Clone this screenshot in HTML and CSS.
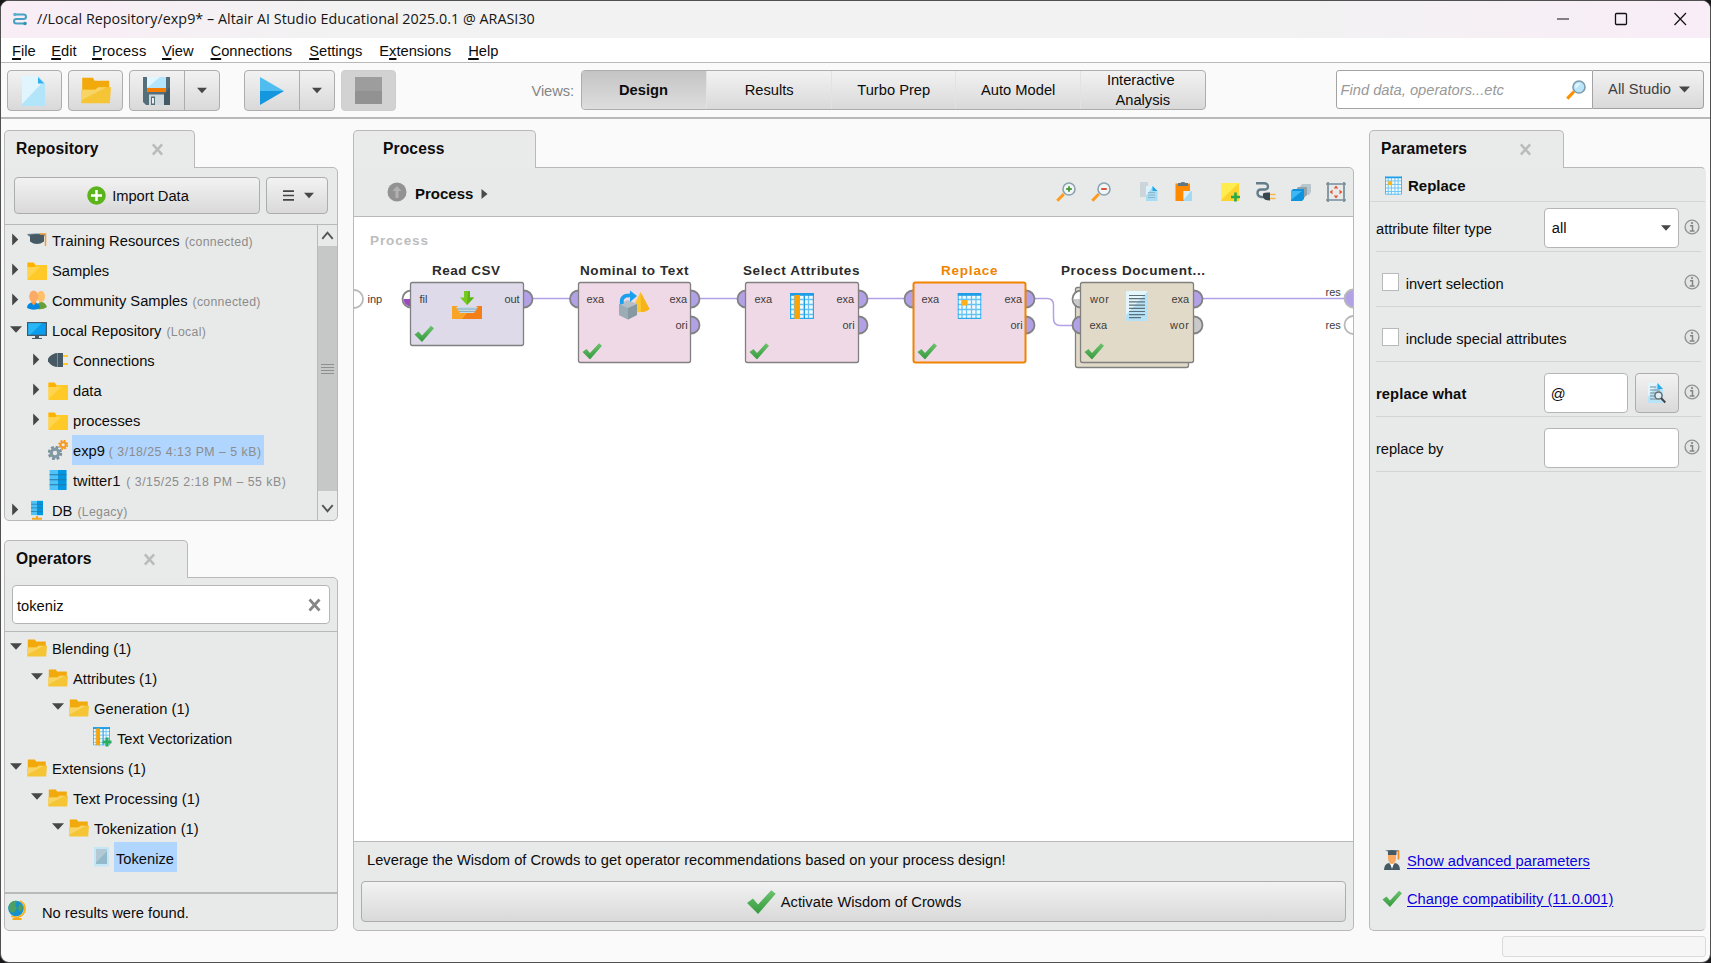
FILE: index.html
```html
<!DOCTYPE html>
<html lang="en">
<head>
<meta charset="utf-8">
<title>Altair AI Studio</title>
<link rel="stylesheet" href="styles.css">
</head>
<body>
<svg class="defs" width="0" height="0" aria-hidden="true">
  <defs>
    <linearGradient id="gCheck" x1="0" y1="0" x2="0" y2="1"><stop offset="0" stop-color="#6cc36f"/><stop offset="1" stop-color="#359a3c"/></linearGradient>
  </defs>
  <symbol id="right" viewBox="0 0 8 14"><path d="M1 .5L7.5 7L1 13.5Z" fill="#474747"/></symbol>
  <symbol id="down" viewBox="0 0 12 7"><path d="M0 .3H12L6 6.8Z" fill="#474747"/></symbol>
  <symbol id="x" viewBox="0 0 14 14"><path d="M2 1.5L12 12.5M12 1.5L2 12.5" stroke="currentColor" stroke-width="2.7" fill="none"/></symbol>
  <symbol id="folder" viewBox="0 0 20 18"><path d="M1 1H7L8.500 3H20V18H.5V1Z" fill="#ffca28"/><path d="M.5 .5H6.500L8 2.500V5H.5Z" fill="#ffb300"/><path d="M.5 5H13L.5 17Z" fill="#ffd54f"/></symbol>
  <symbol id="folderopen" viewBox="0 0 20 18"><path d="M.8 .5H8L9 2.500H18.800V15H.8Z" fill="#f2a90c"/><path d="M.3 17.500V8.500H9.500L11.500 6.800H20L19.200 17.500Z" fill="#f5c535"/><path d="M.3 15.500V8.500H9.500L11.500 6.800H17L.3 15.500Z" fill="#f7d464"/></symbol>
  <symbol id="check" viewBox="0 0 20 17"><path d="M.5 9.500L4.500 6.500L8 10.500L17 .8L20 3.200L8 17Z" fill="url(#gCheck)"/></symbol>
  <symbol id="table" viewBox="0 0 24 26"><rect width="24" height="26" fill="#f2fafe"/><path d="M4.500 2V26M9 2V26M14 2V26M18.500 2V26M0 6.500H24M0 11.500H24M0 16.500H24M0 21.500H24" stroke="#66c2f2" stroke-width="1.300"/><path d="M.6 0V25.400H23.400V0" fill="none" stroke="#29abf2" stroke-width="1.200"/><rect width="24" height="2.800" fill="#1f9ee6"/></symbol>
  <symbol id="tablecell" viewBox="0 0 24 26"><use href="#table" width="24" height="26"/><rect x="4.600" y="7" width="5.500" height="5.500" fill="#ffb210"/></symbol>
  <symbol id="tablecol" viewBox="0 0 24 26"><use href="#table" width="24" height="26"/><path d="M14.500 2V26" stroke="#1f9ee6"/><rect x="4.500" y="2" width="5.500" height="24" fill="#ffa300"/></symbol>
  <symbol id="doc" viewBox="0 0 22 30"><rect width="22" height="30" fill="#b6e2f7"/><path d="M0 0H22L0 24Z" fill="#e4f5fc"/><path d="M3 4.500H19M3 7.700H19M3 10.900H19M3 14.100H19M3 17.300H19M3 20.500H19M3 23.700H19M3 26.700H15" stroke="#5d7078" stroke-width="1.200"/></symbol>
  <symbol id="page" viewBox="0 0 24 30"><path d="M0 0H16L23 7V30H0Z" fill="#b3e5fa"/><path d="M0 0H16L20 7L0 28Z" fill="#e1f5fe"/><path d="M16 1L22 7.500H16Z" fill="#35b0ee"/></symbol>
  <symbol id="glass" viewBox="0 0 20 20"><path d="M8 11.500L1.300 18.600" stroke="#ff9100" stroke-width="3.200"/><circle cx="13" cy="7" r="6" fill="#b9e5fb" stroke="#7f9dac" stroke-width="1.600"/><path d="M9 6a4 4 0 0 1 6-2.500L9.500 9Z" fill="#e1f5fe"/></symbol>
  <symbol id="zoom" viewBox="0 0 20 20"><path d="M7.800 12L1.300 18.800" stroke="#ff9a1c" stroke-width="3"/><circle cx="13" cy="7" r="6" fill="#f0f6f8" stroke="#8ba3af" stroke-width="1.600"/></symbol>
  <symbol id="info" viewBox="0 0 16 16"><circle cx="8" cy="8" r="6.900" fill="#e3e5e5" stroke="#929292" stroke-width="1.400"/><path d="M6 6.700H8.500V11.500M5.700 12H10.500" stroke="#858585" stroke-width="1.500" fill="none"/><circle cx="8" cy="4.100" r="1.100" fill="#858585"/></symbol>
  <symbol id="db" viewBox="0 0 16 19"><rect width="16" height="19" fill="#4fc3f7"/><rect x="8" width="8" height="19" fill="#0397e3"/><path d="M0 4.500H16M0 9.300H16M0 14.100H16" stroke="#2579a6" stroke-width="1"/></symbol>
  <symbol id="gear" viewBox="0 0 20 20"><circle cx="7" cy="13" r="5.900" fill="none" stroke="#78909c" stroke-width="2.600" stroke-dasharray="2.700 1.930"/><circle cx="7" cy="13" r="3.800" fill="none" stroke="#8298a3" stroke-width="3.200"/><circle cx="15.200" cy="4.800" r="4" fill="none" stroke="#ff9100" stroke-width="1.800" stroke-dasharray="1.800 1.340"/><circle cx="15.200" cy="4.800" r="2.600" fill="none" stroke="#f59a26" stroke-width="2.100"/></symbol>
</svg>

<div class="window">
  <header class="titlebar">
    <svg class="logo" viewBox="0 0 14 14"><path d="M1 2.500H10.500Q13 2.500 13 4.700T10.500 7H3.500Q1 7 1 9.200T3.500 11.500H12" fill="none" stroke="#45a2c1" stroke-width="2"/><circle cx="2" cy="2.500" r="1.800" fill="#5db3cf"/><circle cx="12" cy="11.500" r="1.800" fill="#3494b5"/></svg>
    <span class="title">//Local Repository/exp9* – Altair AI Studio Educational 2025.0.1 @ ARASI30</span>
    <svg class="winctl" viewBox="0 0 130 14"><path d="M0 7H12M117.500 1L129 13M129 1L117.500 13" stroke="#111" stroke-width="1.200"/><rect x="58.500" y="1.500" width="11" height="11" rx="1" fill="none" stroke="#111" stroke-width="1.300"/></svg>
  </header>
  <nav class="menubar">
    <span><u>F</u>ile</span><span><u>E</u>dit</span><span class="m-process"><u>P</u>rocess</span><span class="m-view"><u>V</u>iew</span><span><u>C</u>onnections</span><span><u>S</u>ettings</span><span>E<u>x</u>tensions</span><span><u>H</u>elp</span>
  </nav>
  <div class="toolbar">
    <button class="btn tool"><svg width="24" height="30"><use href="#page"/></svg></button>
    <button class="btn tool open"><svg width="30" height="27"><use href="#folderopen"/></svg></button>
    <div class="btn split save"><span class="main"><svg width="27" height="28" viewBox="0 0 27 28"><path d="M0 0H27V28H3L0 25Z" fill="#546e7a"/><path d="M27 0V28H12L27 10Z" fill="#455a64"/><rect x="4" width="19" height="11" fill="#b3e5fc"/><path d="M4 0H17L4 11Z" fill="#e1f5fe"/><rect x="4" y="11" width="19" height="4" fill="#f57c00"/><rect x="6" y="17.500" width="15" height="10.500" fill="#cfd8dc"/><rect x="8" y="19.500" width="4" height="8.500" fill="#546e7a"/><rect x="9" y="21" width="2" height="5.500" fill="#eceff1"/></svg></span><span class="drop"><svg width="10" height="7"><use href="#down"/></svg></span></div>
    <div class="btn split run"><span class="main"><svg width="24" height="28" viewBox="0 0 24 28"><path d="M0 0L24 14H0Z" fill="#4fbdf0"/><path d="M0 14H24L0 28Z" fill="#1597de"/></svg></span><span class="drop"><svg width="10" height="7"><use href="#down"/></svg></span></div>
    <button class="btn tool stop"><i></i></button>
    <span class="views">Views:</span>
    <div class="btn viewgroup"><span class="active">Design</span><span>Results</span><span>Turbo Prep</span><span>Auto Model</span><span class="two">Interactive<br>&nbsp;Analysis</span></div>
    <div class="search"><em>Find data, operators...etc</em><svg width="20" height="20"><use href="#glass"/></svg></div>
    <div class="btn scope">All Studio<svg width="11" height="7"><use href="#down"/></svg></div>
  </div>

  <main class="workspace">
    <section class="left">
      <div class="tab t-repo"><b>Repository</b><svg width="13" height="13"><use href="#x"/></svg></div>
      <div class="panel">
        <div class="importrow">
          <button class="btn import"><svg width="19" height="19" viewBox="0 0 19 19"><circle cx="9.500" cy="9.500" r="9.300" fill="#5cb41c"/><path d="M9.500 4V15M4 9.500H15" stroke="#fff" stroke-width="2.500"/></svg>Import Data</button>
          <button class="btn more"><svg width="11" height="11" viewBox="0 0 11 11"><path d="M0 1.200H11M0 5.500H11M0 9.800H11" stroke="#444" stroke-width="1.700"/></svg><svg width="10" height="7"><use href="#down"/></svg></button>
        </div>
        <div class="treewrap">
          <div class="tree">
            <div class="row"><svg class="r"><use href="#right"/></svg><svg class="ic" viewBox="0 0 20 20"><path d="M0 4L10 3.500L19 4L17 6.500H2Z" fill="#607d8b"/><path d="M3 5.500Q10 3 17 5.500V11.500Q10 16.500 3 11.500Z" fill="#455a64"/><path d="M13 4H18.500V16" fill="none" stroke="#f59a36" stroke-width="1.500"/></svg><span class="wide">Training Resources</span><small>(connected)</small></div>
            <div class="row"><svg class="r"><use href="#right"/></svg><svg class="ic f"><use href="#folder"/></svg><span>Samples</span></div>
            <div class="row"><svg class="r"><use href="#right"/></svg><svg class="ic" viewBox="0 0 20 20"><path d="M10 19Q10 12 14 12T20 17Q16 20 10 19Z" fill="#689f38"/><ellipse cx="14" cy="6.500" rx="4" ry="5.800" fill="#ffc06a"/><path d="M0 18Q0 12.500 6.500 12.500T13 18Q7 21.500 0 18Z" fill="#0288e0"/><path d="M4.500 11H9V13L6.700 15.500L4.500 13Z" fill="#f7953c"/><ellipse cx="6.700" cy="6.500" rx="4.500" ry="6" fill="#fbab66"/></svg><span>Community Samples</span><small>(connected)</small></div>
            <div class="row"><svg class="d"><use href="#down"/></svg><svg class="ic" viewBox="0 0 20 20"><rect y="2" width="20" height="14" fill="#455a64"/><rect x="1.300" y="3.300" width="17.400" height="11.400" fill="#0c9cec"/><path d="M1.300 3.300H15L3 14.700H1.300Z" fill="#29b6f6"/><path d="M8 16H12V18H15V19H5V18H8Z" fill="#455a64"/></svg><span>Local Repository</span><small>(Local)</small></div>
            <div class="row l2"><svg class="r"><use href="#right"/></svg><svg class="ic" viewBox="0 0 20 20"><path d="M0 8.500Q4 3 10 3H15V17H10Q4 17 0 11.500Z" fill="#455a64"/><path d="M9.500 3V17" stroke="#78909c"/><path d="M15 6H20M15 14H20" stroke="#ffca28" stroke-width="1.800"/></svg><span>Connections</span></div>
            <div class="row l2"><svg class="r"><use href="#right"/></svg><svg class="ic f"><use href="#folder"/></svg><span>data</span></div>
            <div class="row l2"><svg class="r"><use href="#right"/></svg><svg class="ic f"><use href="#folder"/></svg><span class="wide">processes</span></div>
            <div class="row l2"><i class="r"></i><svg class="ic"><use href="#gear"/></svg><div class="sel"><span>exp9</span><small class="date">( 3/18/25 4:13 PM – 5 kB)</small></div></div>
            <div class="row l2"><i class="r"></i><svg class="ic"><use href="#db"/></svg><span>twitter1</span><small class="date gap">( 3/15/25 2:18 PM – 55 kB)</small></div>
            <div class="row"><svg class="r"><use href="#right"/></svg><svg class="ic" viewBox="0 0 20 20"><use href="#db" x="4" y="0" width="12" height="16"/><path d="M10 16V19M5 18.800H15" stroke="#f5a623" stroke-width="2"/></svg><span>DB</span><small>(Legacy)</small></div>
          </div>
          <div class="scroll">
            <svg class="up" viewBox="0 0 20 21"><path d="M4.500 14L10 7.500L15.500 14" fill="none" stroke="#555" stroke-width="2"/></svg>
            <div class="thumb"><i></i><i></i><i></i><i></i></div>
            <svg class="up" viewBox="0 0 20 21"><path d="M4.500 10L10 16.500L15.500 10" fill="none" stroke="#555" stroke-width="2"/></svg>
          </div>
        </div>
      </div>
      <div class="tab t-ops"><b>Operators</b><svg width="13" height="13"><use href="#x"/></svg></div>
      <div class="panel">
        <div class="opsearch"><div class="field"><span>tokeniz</span><svg width="15" height="14"><use href="#x"/></svg></div></div>
        <div class="tree ops">
          <div class="row"><svg class="d"><use href="#down"/></svg><svg class="ic f"><use href="#folderopen"/></svg><span>Blending (1)</span></div>
          <div class="row l2"><svg class="d"><use href="#down"/></svg><svg class="ic f"><use href="#folderopen"/></svg><span>Attributes (1)</span></div>
          <div class="row l3"><svg class="d"><use href="#down"/></svg><svg class="ic f"><use href="#folderopen"/></svg><span>Generation (1)</span></div>
          <div class="row l4"><i class="d"></i><svg class="ic" viewBox="0 0 20 20"><use href="#tablecol" x="1" y="0" width="17" height="18.500"/><path d="M15 10.500V19.500M10.500 15H19.500" stroke="#27ae60" stroke-width="3"/></svg><span>Text Vectorization</span></div>
          <div class="row"><svg class="d"><use href="#down"/></svg><svg class="ic f"><use href="#folderopen"/></svg><span>Extensions (1)</span></div>
          <div class="row l2"><svg class="d"><use href="#down"/></svg><svg class="ic f"><use href="#folderopen"/></svg><span class="proc">Text Processing (1)</span></div>
          <div class="row l3"><svg class="d"><use href="#down"/></svg><svg class="ic f"><use href="#folderopen"/></svg><span>Tokenization (1)</span></div>
          <div class="row l4"><i class="d"></i><svg class="ic" viewBox="0 0 20 20"><rect x="2" width="15" height="19.500" fill="#c3e7f7"/><path d="M4 2H15V4L4 15Z" fill="#b3c9d4"/><path d="M15 4V17H4V15Z" fill="#94b9cb"/></svg><div class="sel"><span>Tokenize</span></div></div>
        </div>
        <div class="result"><svg width="18" height="20" viewBox="0 0 18 20"><path d="M12 1Q17 3 17 9T9 17.500L3 16" fill="none" stroke="#f5b21c" stroke-width="1.800"/><path d="M9 17V19M4.500 19H13.500" stroke="#f5a81c" stroke-width="1.800"/><circle cx="8" cy="8.500" r="7.800" fill="#1590cf"/><path d="M1 5Q4 0 9 1L7 5L9 8L6 13Q1 12 .5 8ZM11 4L15 6Q15 10 12 12L10 9Z" fill="#4ca064"/></svg><span>No results were found.</span></div>
      </div>
    </section>

    <section class="center">
      <div class="tab t-proc"><b>Process</b></div>
      <div class="panel">
        <div class="prochead">
          <svg width="20" height="20" viewBox="0 0 20 20"><circle cx="10" cy="10" r="9.500" fill="#929292"/><path d="M10 4L14.500 9H11.500V16H8.500V9H5.500Z" fill="#b2b2b2"/></svg>
          <b>Process</b><svg class="crumb" width="7" height="10"><path d="M.5 0L6.500 5L.5 10Z" fill="#4a4a4a"/></svg>
          <div class="tools">
            <svg viewBox="0 0 20 20"><use href="#zoom"/><path d="M13 4.200V9.800M10.200 7H15.800" stroke="#4c9a3a" stroke-width="1.900"/></svg>
            <svg class="g1" viewBox="0 0 20 20"><use href="#zoom"/><path d="M10.200 7H15.800" stroke="#e0533a" stroke-width="1.900"/></svg>
            <svg class="g2" viewBox="0 0 20 20"><path d="M1 0H9V15H1Z" fill="#ccd6da"/><path d="M7 4H14L18.500 9V19H7Z" fill="#a8dcf5"/><path d="M7 4H14L7 14Z" fill="#dcf2fc"/><path d="M13.500 4L18.500 9H13.500Z" fill="#1fa5ea"/><path d="M9 10.500H16M9 13H16M9 15.500H16" stroke="#8fb5c6"/></svg>
            <svg class="g1" viewBox="0 0 20 20"><rect x="1.500" y="1.500" width="14.500" height="17.500" fill="#ff8a00"/><path d="M8 19L16 9V19Z" fill="#f57000"/><path d="M4 1H6.500Q7 0 9 0T11.500 1H14V4H4Z" fill="#5f7883"/><path d="M9.500 9H18V19H9.500Z" fill="#a4d9f3"/><path d="M9.500 9H17L9.500 18Z" fill="#d9eef8"/></svg>
            <svg class="g3" viewBox="0 0 20 20"><path d="M0 1H18V19H0Z" fill="#fdd32c"/><path d="M0 1H18L0 18Z" fill="#ffec4f"/><path d="M14.500 10.500V19.500M10 15H19" stroke="#27a84a" stroke-width="2.600"/></svg>
            <svg class="g1" viewBox="0 0 20 20"><path d="M0 1.300H8Q12 1.300 12 4.500T8 7.500H5Q1.500 7.500 1.500 11T5.500 15H8" fill="none" stroke="#647d8a" stroke-width="2.400"/><path d="M7 11.500Q9 10 14 10.500V18.500Q8 18.500 7 15Z" fill="#37474f"/><path d="M14 12.500H19.500M14 16.500H19.500" stroke="#f5b74c" stroke-width="1.500"/></svg>
            <svg class="g1" viewBox="0 0 20 20"><path d="M9 5L11 2H20V10L18 13H9Z" fill="#b9c6cc"/><path d="M5 8L7 5H16V13L13 16H5Z" fill="#8fa3ad"/><path d="M0 9L2 7H13V17L11 19H0Z" fill="#0f93df"/><path d="M0 9H11L0 18Z" fill="#3db8f5"/></svg>
            <svg class="g1" viewBox="0 0 20 20"><path d="M2 0V20M18 0V20M0 2H20M0 18H20" stroke="#758d99" stroke-width="1.700"/><path d="M10 3.500L12.300 6.500H7.700ZM10 16.500L7.700 13.500H12.300ZM3.500 10L6.500 7.700V12.300ZM16.500 10L13.500 12.300V7.700Z" fill="#e5532d"/></svg>
          </div>
        </div>
        <svg class="canvas" viewBox="354 217 999 624">
          <text class="ghost" x="370" y="244.500" textLength="58">Process</text>
          <g class="wire"><path d="M533 298.500H571M700 298.500H738M868 298.500H905M1202 298.500H1345M1034 298.500H1047Q1053.500 298.500 1053.500 305V318Q1053.500 325.500 1060 325.500H1072"/></g>
          <g class="port outer"><circle cx="354" cy="299" r="9" class="empty"/><circle cx="1353.500" cy="298.500" r="9"/><circle cx="1353.500" cy="325" r="9" class="empty"/></g>
          <g class="wire"><path d="M1346 298.500H1354"/></g>
          <g class="pt"><text x="367.500" y="302.500">inp</text><text x="1325.500" y="296">res</text><text x="1325.500" y="329">res</text></g>

          <rect class="box tan" x="1075.500" y="287.500" width="113" height="80" rx="2"/>
          <g class="port">
            <circle cx="411" cy="299" r="8.500" class="empty"/><path class="file" d="M403.500 299H411V306.500Q404 306 403.500 299Z"/>
            <circle cx="524" cy="299" r="8.500"/>
            <circle cx="578.500" cy="299" r="8.500"/><circle cx="691" cy="299" r="8.500"/><circle cx="691" cy="325" r="8.500"/>
            <circle cx="746" cy="299" r="8.500"/><circle cx="859" cy="299" r="8.500"/><circle cx="859" cy="325" r="8.500"/>
            <circle cx="913" cy="299" r="8.500"/><circle cx="1026" cy="299" r="8.500"/><circle cx="1026" cy="325" r="8.500"/>
            <circle cx="1081" cy="299" r="8.500" class="empty"/><path class="grayfill" d="M1073.500 299H1081V306.500Q1074 306 1073.500 299Z"/><circle cx="1081" cy="325" r="8.500"/>
            <circle cx="1194" cy="299" r="8.500"/><circle cx="1194" cy="325" r="8.500" class="gray"/>
          </g>
          <rect class="box lilac" x="410.500" y="282.500" width="113" height="63" rx="2"/>
          <rect class="box pink" x="578.500" y="282.500" width="112" height="80" rx="2"/>
          <rect class="box pink" x="745.500" y="282.500" width="113" height="80" rx="2"/>
          <rect class="box pink chosen" x="913.500" y="282.500" width="112" height="80" rx="2"/>
          <rect class="box tan" x="1080.500" y="282.500" width="113" height="80" rx="2"/>

          <g class="name">
            <text x="432" y="274.700" textLength="68">Read CSV</text>
            <text x="580" y="274.700" textLength="108.500">Nominal to Text</text>
            <text x="743" y="274.700" textLength="116.500">Select Attributes</text>
            <text x="941" y="274.700" textLength="56.500" class="orange">Replace</text>
            <text x="1061" y="274.700" textLength="144">Process Document...</text>
          </g>
          <g class="pt">
            <text x="419.500" y="303">fil</text><text x="504.500" y="303" textLength="15">out</text>
            <text x="586.500" y="303">exa</text><text x="669.500" y="303">exa</text><text x="675.500" y="329">ori</text>
            <text x="754.500" y="303">exa</text><text x="836.500" y="303">exa</text><text x="842.500" y="329">ori</text>
            <text x="921.500" y="303">exa</text><text x="1004.500" y="303">exa</text><text x="1010.500" y="329">ori</text>
            <text x="1090" y="303" textLength="19">wor</text><text x="1089.500" y="329">exa</text><text x="1171.500" y="303">exa</text><text x="1170" y="329" textLength="19">wor</text>
          </g>
          <g>
            <path d="M452 306H457L461 313H473L477 306H482V319H452Z" fill="#f9a426"/><path d="M467 313H473L477 306H482V319H462Z" fill="#f57f17"/>
            <path d="M456 307H478L474 313H460Z" fill="#c4dbe7"/><path d="M457 309H477M459 311.500H475" stroke="#7fa0b3" stroke-width=".8"/>
            <path d="M464 291H470V297.500H474L467 305L460 297.500H464Z" fill="#76c91f"/><path d="M467 305L474 297.500H470V291H468Z" fill="#5db514"/>
            <path d="M640.500 292L649.500 309Q645 313 636 312L632 309Z" fill="#fdc82f"/><path d="M640.500 292L649.500 309Q646 312 641 312Z" fill="#f5b41a"/>
            <path d="M619 304L628 300L637 304V315L628 319.500L619 315Z" fill="#b4c0c6"/><path d="M619 304L628 308V319.500L619 315Z" fill="#9cacb4"/><path d="M628 308L637 304V315L628 319.500Z" fill="#8698a1"/>
            <path d="M622 304Q620 295 631 295.500" fill="none" stroke="#1ba0ee" stroke-width="3.800"/><path d="M630 290.500L637 296L630 302Z" fill="#1ba0ee"/>
            <use href="#tablecol" x="790" y="293" width="24" height="26"/>
            <use href="#tablecell" x="957" y="293" width="25" height="26"/>
            <use href="#doc" x="1126" y="291" width="22" height="30"/>
            <use href="#check" x="414" y="325" width="20" height="17"/>
            <use href="#check" x="582" y="342.500" width="20" height="17"/>
            <use href="#check" x="749" y="342.500" width="20" height="17"/>
            <use href="#check" x="917" y="342.500" width="20" height="17"/>
            <use href="#check" x="1084" y="342.500" width="20" height="17"/>
          </g>
        </svg>
        <div class="crowds">
          <p>Leverage the Wisdom of Crowds to get operator recommendations based on your process design!</p>
          <button class="btn"><svg width="30" height="25"><use href="#check"/></svg>Activate Wisdom of Crowds</button>
        </div>
      </div>
    </section>

    <section class="right">
      <div class="tab t-par"><b>Parameters</b><svg width="13" height="13"><use href="#x"/></svg></div>
      <div class="panel">
        <div class="parhead"><svg width="17" height="19"><use href="#tablecell"/></svg><b>Replace</b></div>
        <div class="params">
          <div class="param first"><label>attribute filter type</label><div class="field combo">all<svg width="10" height="8"><use href="#down"/></svg></div><svg class="info"><use href="#info"/></svg></div>
          <div class="param"><i class="box"></i><label class="w2">invert selection</label><svg class="info"><use href="#info"/></svg></div>
          <div class="param"><i class="box"></i><label class="w2">include special attributes</label><svg class="info"><use href="#info"/></svg></div>
          <div class="param"><label class="bold">replace what</label><div class="field short">@</div><button class="btn regex"><svg width="18" height="21" viewBox="0 0 18 21"><path d="M0 0H10L15 6V20H0Z" fill="#b9e4f8"/><path d="M0 0H10L0 14Z" fill="#e2f4fc"/><path d="M9.500 0L15 6H9.500Z" fill="#2aabec"/><path d="M2 4H8M2 7H12M2 10H8M2 13H7M2 16H9" stroke="#6e8b99"/><circle cx="10.500" cy="12.500" r="3.600" fill="#dceff7" stroke="#6b6b6b" stroke-width="1.500"/><path d="M13 15L17.300 19.500" stroke="#444" stroke-width="2"/></svg></button><svg class="info"><use href="#info"/></svg></div>
          <div class="param"><label>replace by</label><div class="field"></div><svg class="info"><use href="#info"/></svg></div>
        </div>
        <div class="links">
          <div><svg width="18" height="21" viewBox="0 0 18 21"><path d="M1 20Q1 14 6 13L9 16L12 13Q17 14 17 20Z" fill="#455a64"/><path d="M7 13L9 19L11 13Z" fill="#fff"/><path d="M5 5H13V9Q12 14 9 14T5 9Z" fill="#f7a861"/><path d="M2 .5L9 0L16 .5V1.500H13.500V5H5V1.500Z" fill="#455a64"/><path d="M15.500 .5V9.500" stroke="#f08a28" stroke-width="1.700"/></svg><a>Show advanced parameters</a></div>
          <div><svg width="20" height="17"><use href="#check"/></svg><a>Change compatibility (11.0.001)</a></div>
        </div>
      </div>
    </section>
  </main>
  <footer class="status"><div></div></footer>
</div>
</body>
</html>
```

FILE: styles.css
```css
* { box-sizing: border-box; }
html, body { margin: 0; height: 963px; overflow: hidden; background: #18181a; }
body { font: 14.7px/20px "Liberation Sans", Arial, sans-serif; color: #0c0c0c; }
svg { display: block; flex: none; }
button { font: inherit; color: inherit; padding: 0; }
.defs { position: absolute; }

.window { width: 1711px; height: 963px; border: 1px solid #505050; border-radius: 9px; overflow: hidden; background: #fafafa; display: flex; flex-direction: column; }
.titlebar { height: 37px; flex: none; display: flex; align-items: center; padding: 0 23px 2px 12px; background: linear-gradient(90deg, #f9edf6 0, #f2f2f2 330px, #f2f2f2 1290px, #f9edf7 100%); }
.logo { width: 14px; height: 14px; }
.title { font: 14.3px/20px "Open Sans", "Noto Sans", sans-serif; letter-spacing: .03px; margin-left: 10px; white-space: nowrap; margin-right: auto; color: #151515; }
.winctl { width: 130px; height: 14px; }

.menubar { height: 25px; flex: none; background: #fff; border-bottom: 1px solid #b9b9b9; display: flex; gap: 16px; padding: 3px 0 0 11px; }
.menubar span + span { margin-left: -.5px; }
.menubar u { text-decoration-thickness: 1.500px; text-underline-offset: 2px; }
.menubar .m-process { letter-spacing: .2px; }
.menubar .m-view ~ span { margin-left: 1px; }

.btn { border: 1px solid #adadad; border-radius: 4px; background: linear-gradient(#f2f2f2, #d9d9d9); display: flex; align-items: center; justify-content: center; }
.toolbar { height: 56px; flex: none; border-bottom: 2px solid #b9b9b9; padding: 7px 6px 0; display: flex; align-items: flex-start; }
.tool { width: 55px; height: 41px; margin-right: 6px; }
.open { padding-left: 2px; }
.split { width: 91px; height: 41px; align-items: stretch; }
.save { margin-right: 24px; }
.run { margin-right: 6px; }
.main { width: 55px; border-right: 1px solid #adadad; display: flex; align-items: center; justify-content: center; }
.drop { flex: 1; display: flex; align-items: center; justify-content: center; }
.stop { background: #d2d2d2; border-color: #cecece; margin: 0; }
.stop i { width: 27px; height: 27px; background: linear-gradient(#9d9d9d 50%, #929292 50%); }
.views { color: #858585; margin: 11px 7px 0 136px; width: 43px; letter-spacing: -.1px; }
.viewgroup { width: 625px; height: 40px; display: grid; grid-template-columns: 124px repeat(4, 1fr); align-items: stretch; overflow: hidden; line-height: 38px; }
.viewgroup span { text-align: center; border-left: 1px solid #e2e2e2; }
.viewgroup span.active { font-weight: bold; background: linear-gradient(#c4c4c4, #dedede); border: 0; padding-right: 2px; }
.viewgroup .two { line-height: 20px; margin-top: -1px; padding-right: 4px; }
.search { margin-left: 130px; width: 258px; height: 39px; background: #fff; border: 1px solid #a3a3a3; border-radius: 3px 0 0 3px; padding: 0 6px 0 4px; display: flex; align-items: center; justify-content: space-between; }
.search em { color: #999; padding-top: 1px; }
.scope { width: 111px; height: 39px; border-color: #a0a0a0; border-left: 0; border-radius: 0 4px 4px 0; gap: 8px; color: #3d3d3d; padding: 0 0 1px 2px; letter-spacing: .1px; }

.workspace { display: flex; gap: 15px; padding: 11px 4px 0 3px; height: 812px; flex: none; }
.left { width: 334px; }
.center { width: 1001px; }
.right { width: 337px; }
.left, .center, .right { display: flex; flex-direction: column; flex: none; }
.tab { position: relative; z-index: 1; height: 38px; margin-bottom: -1px; flex: none; background: linear-gradient(#eaeaea, #e9eaea); border: 1px solid #b9b9b9; border-bottom: 0; border-radius: 5px 5px 0 0; display: flex; align-items: center; font-size: 15.600px; color: #bbb; padding-bottom: 1px; }
.tab b { color: #0c0c0c; letter-spacing: .12px; }
.t-repo { width: 191px; padding: 0 30px 1px 11px; justify-content: space-between; }
.t-ops { width: 184px; padding: 0 31px 1px 11px; justify-content: space-between; margin-top: 19px; }
.t-proc { width: 183px; padding-left: 29px; }
.t-par { width: 195px; padding: 0 31px 1px 11px; justify-content: space-between; }
.panel { background: #e8eae9; border: 1px solid #b9b9b9; border-radius: 0 5px 5px 5px; overflow: hidden; display: flex; flex-direction: column; }
.left .panel { height: 354px; flex: none; }
.center .panel, .right .panel { flex: 1; }
.right .panel { border-right-color: #e8eae9; }

.importrow { height: 57px; flex: none; border-bottom: 1px solid #b9b9b9; padding: 9px 9px 0; display: flex; gap: 6px; }
.import { width: 246px; height: 37px; gap: 6px; padding-left: 2px; }
.more { width: 62px; height: 37px; gap: 10px; padding-left: 3px; }
.treewrap { display: flex; flex: 1; overflow: hidden; min-height: 0; }
.tree { flex: 1; overflow: hidden; }
.row { height: 30px; display: flex; align-items: center; padding-left: 4px; white-space: nowrap; }
.row.l2 { padding-left: 25px; }
.row.l3 { padding-left: 46px; }
.row.l4 { padding-left: 69px; }
.row .r { width: 8px; height: 13px; margin: -2px 8px 0 2px; }
.row .d { width: 12px; height: 7px; margin: -2px 5px 0 1px; }
.row .ic { width: 20px; height: 20px; margin-right: 5px; }
.row .ic.f { height: 18px; margin-top: 2px; }
.row span { padding-top: 2px; }
.row .wide { letter-spacing: .05px; }
.row .proc, .l3 span { letter-spacing: .07px; }
.row small { font-size: 12.300px; letter-spacing: .3px; color: #8c8c8c; padding: 3px 0 0 5px; }
.row small.date { letter-spacing: .5px; padding-left: 4px; }
.row small.gap { padding-left: 6px; }
.sel { background: #b0d5ff; height: 30px; display: flex; align-items: center; margin-left: -1px; padding: 0 3px 0 1px; }
.ops .sel { margin-left: -3px; padding: 0 3px 0 2px; }
.ops .row span { padding-top: 4px; }
.scroll { width: 20px; border-left: 1px solid #b9b9b9; display: flex; flex-direction: column; }
.scroll .up { width: 19px; height: 21px; }
.scroll .thumb { flex: 1; background: #c6c8c7; display: flex; flex-direction: column; align-items: center; justify-content: center; gap: 2px; }
.scroll svg:last-child { height: 29px; }
.thumb i { width: 13px; height: 1px; background: #8f8f8f; }

.opsearch { height: 54px; border-bottom: 1px solid #b9b9b9; padding: 7px 7px 0; flex: none; }
.field { background: #fff; border: 1px solid #b5b5b5; border-radius: 4px; display: flex; align-items: center; }
.opsearch .field { height: 39px; width: 318px; padding: 1px 7px 0 4px; justify-content: space-between; color: #858585; }
.opsearch .field span { color: #0c0c0c; padding-top: 2px; }
.result { height: 38px; border-top: 2px solid #b9b9b9; display: flex; padding: 6px 0 0 3px; gap: 16px; flex: none; }
.result span { padding-top: 3px; }

.prochead { height: 49px; flex: none; border-bottom: 1px solid #b9b9b9; display: flex; align-items: center; padding: 0 7px 0 33px; }
.prochead b { margin-left: 8px; font-size: 15px; padding-top: 3px; }
.prochead .crumb { margin: 4px 0 0 8px; }
.tools { display: flex; margin-left: auto; }
.tools svg { width: 20px; height: 20px; }
.tools .g1 { margin-left: 15px; }
.tools .g2 { margin-left: 28px; }
.tools .g3 { margin-left: 27px; }
.canvas { width: 999px; height: 624px; flex: none; background: #fff; }
.ghost { font: bold 13.500px "Liberation Sans", sans-serif; fill: #bdbdbd; }
.name { font: bold 13.500px "Liberation Sans", sans-serif; fill: #2b2b2b; }
.name .orange { fill: #f08400; }
.pt { font: 11px "Liberation Sans", sans-serif; fill: #3c3c3c; }
.wire path { fill: none; stroke: #b3a0e6; stroke-width: 1.500; }
.port circle { fill: #b3a1e7; stroke: #828282; stroke-width: 1.800; }
.port.outer circle { stroke: #b9b9b9; }
.port circle.empty { fill: #fff; }
.port circle.gray, .grayfill { fill: #c9c9c9; }
.file { fill: #9b49c0; }
.box { stroke: #808080; stroke-width: 1.300; }
.lilac { fill: #dedaea; }
.pink { fill: #f0d9e6; }
.tan { fill: #e2dac8; }
.chosen { stroke: #f08400; stroke-width: 2; }
.crowds { border-top: 1px solid #b9b9b9; flex: 1; padding: 8px 7px 0; }
.crowds p { margin: 0 0 11px 6px; white-space: nowrap; letter-spacing: .01px; }
.crowds .btn { width: 985px; height: 41px; gap: 5px; letter-spacing: .04px; }

.parhead { height: 34px; flex: none; border-bottom: 1px solid #d4d6d5; display: flex; align-items: center; gap: 6px; padding: 2px 0 0 15px; font-size: 15px; }
.params { padding: 0 4px 0 6px; }
.param { height: 55px; border-bottom: 1px solid #d2d4d3; display: flex; align-items: center; padding: 8px 1px 0 0; }
.param.first { height: 50px; padding-top: 3px; }
.param label { width: 169px; padding-top: 1px; white-space: nowrap; letter-spacing: -.04px; }
.param .w2 { width: 280px; letter-spacing: 0; }
.param .bold { font-weight: bold; letter-spacing: .12px; }
.param .field { width: 136px; height: 40px; padding-left: 7px; }
.param .combo { justify-content: space-between; padding-right: 7px; }
.param .short { width: 85px; margin-right: 7px; padding: 2px 0 0 6px; }
.regex { width: 44px; height: 40px; }
.info { width: 16px; height: 16px; margin: -3px 0 0 5px; }
.param i.box { width: 17px; height: 18px; background: #fff; border: 1px solid #b9b9b9; margin: -2px 7px 0 6px; }
.links { margin-top: auto; padding: 0 0 13px 12px; }
.links div { height: 38px; display: flex; align-items: center; }
.links svg { width: 20px; margin-right: 5px; }
.links a { color: #0a00e0; text-decoration: underline; text-underline-offset: 2px; padding-top: 1px; }
.status { display: flex; justify-content: flex-end; padding: 5px 4px 0 0; }
.status div { width: 204px; height: 21px; border: 1px solid #dadada; border-radius: 3px; background: #f6f6f6; }
```
